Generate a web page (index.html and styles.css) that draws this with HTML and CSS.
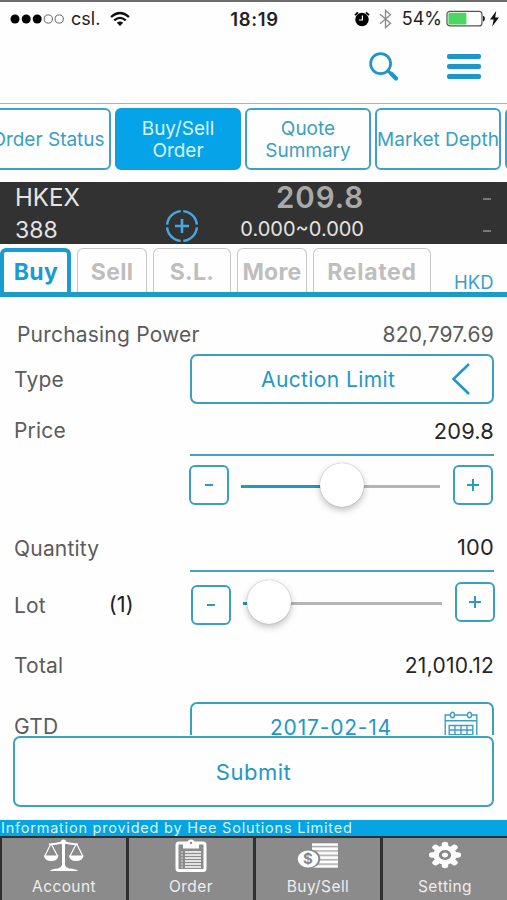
FILE: index.html
```html
<!DOCTYPE html>
<html lang="en">
   <head>
      <meta charset="utf-8" />
      <meta name="viewport" content="width=device-width" />
      <title>Buy/Sell Order</title>
      <link rel="stylesheet" href="styles.css">
   </head>

   <body>

      <div class="status">
         <div class="status-left">
            <svg class="signal" width="54" height="12" viewBox="0 0 54 12">
               <g fill="#000"><circle cx="5" cy="6" r="4.5"/><circle cx="16.2" cy="6" r="4.5"/><circle cx="27.2" cy="6" r="4.5"/></g>
               <g fill="none" stroke="#666" stroke-width="1"><circle cx="38.3" cy="6" r="4.1"/><circle cx="49.2" cy="6" r="4.1"/></g>
            </svg>
            <span class="carrier">csl.</span>
            <svg width="20" height="16" viewBox="0 0 20 16" fill="none" stroke="#111" stroke-width="2.3">
               <path d="M1 6 Q10 -2 19 6"/><path d="M4.3 9.4 Q10 4.3 15.7 9.4"/><path d="M10 15 L6.8 11.8 Q10 9.4 13.2 11.8 Z" fill="#111" stroke="none"/>
            </svg>
         </div>
         <span class="clock">18:19</span>
         <div class="status-right">
            <svg width="16" height="16" viewBox="0 0 16 16">
               <circle cx="8" cy="8.5" r="6.7" fill="#000"/>
               <path d="M1 4.2 L4 1.4 M15 4.2 L12 1.4" stroke="#000" stroke-width="1.8"/>
               <path d="M8.4 4.6 V9 H5" stroke="#fff" stroke-width="1.2" fill="none"/>
            </svg>
            <svg class="bluetooth" width="13" height="20" viewBox="0 0 13 20" fill="none" stroke="#888" stroke-width="1.3">
               <path d="M1 5.3 L11.5 14.2 L6.5 18.6 V1.4 L11.5 5.8 L1 14.7"/>
            </svg>
            <span class="percent">54%</span>
            <svg width="40" height="18" viewBox="0 0 40 18">
               <rect x="1" y="1.3" width="35" height="14.6" rx="3" fill="#fff" stroke="#555" stroke-width="1.2"/>
               <rect x="2.4" y="2.7" width="18" height="11.8" rx="1.3" fill="#4cd763"/>
               <path d="M37.5 6 Q39.6 8.6 37.5 11.2 Z" fill="#222" stroke="#222"/>
            </svg>
            <svg class="bolt" width="9" height="16" viewBox="0 0 9 16"><path d="M6.2 0 L0 8.4 H3.7 L2.2 15.5 L9 6.6 H5.2 Z" fill="#111"/></svg>
         </div>
      </div>

      <div class="header">
         <svg class="search" width="32" height="32" viewBox="0 0 32 32" fill="none" stroke="#1e95cb">
            <circle cx="12.6" cy="12.6" r="10" stroke-width="2.7"/>
            <path d="M20 20 L24 23.6" stroke-width="3"/>
            <path d="M23.3 22.8 L28 27.5" stroke-width="4.4" stroke-linecap="round"/>
         </svg>
         <div class="burger"><i></i><i></i><i></i></div>
      </div>

      <div class="pages">
         <div class="page">Order Status</div>
         <div class="page active">Buy/Sell<br>Order</div>
         <div class="page">Quote<br>Summary</div>
         <div class="page">Market Depth</div>
         <div class="page"></div>
      </div>

      <div class="quote">
         <div class="stock"><span class="stock-name">HKEX</span><span class="stock-code">388</span></div>
         <svg class="target" width="34" height="34" viewBox="0 0 34 34" fill="none" stroke="#46a9e4" stroke-width="2.4">
            <path d="M18.3 2.1 A15 15 0 0 1 31.9 15.7 M31.9 18.3 A15 15 0 0 1 18.3 31.9 M15.7 31.9 A15 15 0 0 1 2.1 18.3 M2.1 15.7 A15 15 0 0 1 15.7 2.1"/>
            <path d="M17 10 V24 M10 17 H24" stroke-width="2.6"/>
         </svg>
         <div class="last"><span class="last-price">209.8</span><span class="range">0.000~0.000</span></div>
         <div class="change"><i></i><i></i></div>
      </div>

      <div class="tabs">
         <div class="tab buy">Buy</div>
         <div class="tab sell">Sell</div>
         <div class="tab sl">S.L.</div>
         <div class="tab more">More</div>
         <div class="tab related">Related</div>
         <span class="currency">HKD</span>
      </div>

      <div class="form">
         <div class="row power">
            <span>Purchasing Power</span>
            <span class="value">820,797.69</span>
         </div>

         <div class="row type">
            <span class="label">Type</span>
            <div class="select">
               <span>Auction Limit</span>
               <svg width="20" height="34" viewBox="0 0 20 34" fill="none" stroke="#1e95cb" stroke-width="2.5"><path d="M18 2 L2.5 17 L18 32"/></svg>
            </div>
         </div>

         <div class="row price">
            <span class="label">Price</span>
            <div class="field"><span>209.8</span></div>
         </div>
         <div class="row step-price">
            <span class="label"></span>
            <div class="stepper">
               <button class="minus"></button>
               <div class="slider"><div class="fill"></div><div class="thumb"></div></div>
               <button class="plus"></button>
            </div>
         </div>

         <div class="row quantity">
            <span class="label">Quantity</span>
            <div class="field"><span>100</span></div>
         </div>
         <div class="row step-lot">
            <span class="label"><span>Lot</span><span class="lot-size">(1)</span></span>
            <div class="stepper">
               <button class="minus"></button>
               <div class="slider low"><div class="fill"></div><div class="thumb"></div></div>
               <button class="plus"></button>
            </div>
         </div>

         <div class="row total">
            <span class="label">Total</span>
            <span class="value">21,010.12</span>
         </div>

         <div class="row gtd">
            <span class="label">GTD</span>
            <div class="select date">
               <span>2017-02-14</span>
               <svg width="34" height="34" viewBox="0 0 34 34" fill="none" stroke="#3d9fc6" stroke-width="1.4">
                  <path d="M6.5 4 H1.2 V33 H32.8 V4 H27.5 M10.5 4 H23.5 M1 9.8 H33"/>
                  <ellipse cx="8.5" cy="4" rx="2" ry="2.8"/><ellipse cx="25.5" cy="4" rx="2" ry="2.8"/>
                  <path d="M5.2 14.5 H28.8 V29 H5.2 Z M5.2 19 H28.8 M5.2 23.8 H28.8 M11 14.5 V29 M17 14.5 V29 M23 14.5 V29"/>
               </svg>
            </div>
         </div>
      </div>

      <button class="submit"><span>Submit</span></button>

      <div class="provider"><span>Information provided by Hee Solutions Limited</span></div>

      <div class="nav">
         <div class="nav-item">
            <svg width="42" height="34" viewBox="0 0 42 34" fill="none" stroke="#fff">
               <path d="M20.5 2 V29" stroke-width="3"/><path d="M6 5.5 Q13 5 20.5 3.3 Q28 5 35 5.5" stroke-width="2.2"/>
               <circle cx="20.5" cy="3" r="2.6" fill="#fff" stroke="none"/>
               <path d="M7.5 5.5 L1.8 17 M8.5 5.5 L14.5 17 M33 5.5 L27 17 M34 5.5 L39.7 17" stroke-width="1.2"/>
               <path d="M0.8 16.5 H15.7 Q14.5 22 8.2 22 Q2 22 0.8 16.5 Z M25.8 16.5 H40.7 Q39.5 22 33 22 Q27 22 25.8 16.5 Z M7 32 Q8 30 15 29.5 Q18 29 19 26 H22 Q23 29 26 29.5 Q34 30 35 32 Z" fill="#fff" stroke="none"/>
            </svg>
            <span>Account</span>
         </div>
         <div class="nav-item">
            <svg width="32" height="34" viewBox="0 0 32 34" fill="none" stroke="#fff">
               <rect x="2" y="4" width="28" height="27.5" rx="2" stroke-width="3"/>
               <path d="M8 4 H12.4 Q12.8 .6 16 .6 Q19.2 .6 19.6 4 H24 V9.5 H8 Z" fill="#fff" stroke="none"/>
               <circle cx="16" cy="4" r="1.2" fill="#8b8b8b" stroke="none"/>
               <path d="M10 13 H26 M10 16 H26 M10 19 H26 M10 22 H26 M10 25 H26 M10 28 H26" stroke-width="1.3"/>
               <path d="M5.8 13 H8 M5.8 16 H8 M5.8 19 H8 M5.8 22 H8 M5.8 25 H8 M5.8 28 H8" stroke="#ddd" stroke-width="1"/>
            </svg>
            <span>Order</span>
         </div>
         <div class="nav-item">
            <svg width="42" height="34" viewBox="0 0 42 34">
               <rect x="15" y="4.5" width="26" height="24" fill="#ddd"/>
               <path d="M15 5.5 H41 M15 9.9 H41 M15 14.3 H41 M15 18.7 H41 M15 23.1 H41 M15 27.6 H41" stroke="#fff" stroke-width="2"/>
               <path d="M15 7.5 H41 M15 11.9 H41 M15 16.3 H41 M15 20.7 H41 M15 25.1 H41" stroke="#aaa" stroke-width="1"/>
               <ellipse cx="11.5" cy="19.8" rx="11.8" ry="9.8" fill="#8b8b8b"/>
               <ellipse cx="11" cy="20" rx="10.3" ry="8.6" fill="#fff"/>
               <text class="dollar" x="11" y="25.3" text-anchor="middle">$</text>
            </svg>
            <span>Buy/Sell</span>
         </div>
         <div class="nav-item">
            <svg width="36" height="34" viewBox="0 0 36 34">
               <g transform="translate(18 16) scale(1.22 1)">
                  <g stroke="#fff" stroke-width="5.4" stroke-linecap="round">
                     <path d="M0 -10.5 V10.5 M-10.5 0 H10.5 M-7.7 -7.7 L7.7 7.7 M-7.7 7.7 L7.7 -7.7"/>
                  </g>
                  <circle r="9.5" fill="#fff"/>
                  <circle r="3.8" fill="#fff" stroke="#888" stroke-width="2.6"/>
               </g>
            </svg>
            <span>Setting</span>
         </div>
      </div>
   </body>
</html>
```
FILE: styles.css
```css
* {
  box-sizing: border-box;
}

body {
  margin: 0;
  width: 507px;
  height: 900px;
  overflow: hidden;
  background-color: #fefefe;
  font-family: Inter, 'Liberation Sans', sans-serif;
  color: #5b5b5b;
  font-size: 21px;
  line-height: 1;
}

svg {
  display: block;
  flex: none;
}

span {
  white-space: nowrap;
}

button {
  padding: 0;
  font-family: inherit;
  background-color: #fefefe;
}

/* phone status bar */
.status {
  display: grid;
  grid-template-columns: 1fr auto 1fr;
  align-items: center;
  height: 36px;
  padding: 0 8px 0 10px;
  border-top: 2px solid #6d6d6d;
  color: #222;
  font-size: 18px;
}

.status-left, .status-right {
  display: flex;
  align-items: center;
}

.status-left {
  gap: 7px;
}

.carrier {
  width: 32px;
}

.clock {
  font-size: 18.5px;
  font-weight: 600;
  letter-spacing: .7px;
}

.status-right {
  justify-content: flex-end;
}

.bluetooth {
  margin: 0 10px 0 9px;
}

.percent {
  margin-right: 4px;
}

.bolt {
  margin-left: 4px;
}

.header {
  display: flex;
  justify-content: flex-end;
  align-items: flex-start;
  height: 68px;
  padding: 15px 26px 0 0;
  border-bottom: 1px solid #b3adb5;
}

.burger {
  display: flex;
  flex-direction: column;
  gap: 5px;
  width: 34px;
  margin: 3px 0 0 47px;
}

.burger i {
  height: 5px;
  border-radius: 2px;
  background-color: #1e95cb;
}

/* scrolling page buttons */
.pages {
  display: flex;
  gap: 4px;
  height: 78px;
  margin-left: -15px;
  padding-top: 4px;
  overflow: hidden;
}

.page {
  flex: none;
  display: flex;
  align-items: center;
  justify-content: center;
  width: 126px;
  height: 62px;
  padding-top: 2px;
  border: 2px solid #3da2c6;
  border-radius: 6px;
  color: #3a9fc3;
  font-size: 19px;
  line-height: 22px;
  text-align: center;
}

.page.active {
  border-color: #109fdd;
  background-color: #05a3e8;
  color: #d8f6ff;
}

/* stock bar */
.quote {
  display: flex;
  height: 62px;
  background-color: #323232;
  color: #e4e4e4;
}

.stock {
  display: flex;
  flex-direction: column;
  gap: 9px;
  width: 165px;
  padding: 4px 0 0 15px;
  font-size: 23px;
}

.stock-name {
  font-size: 24px;
}

.target {
  margin-top: 27px;
}

.last {
  display: flex;
  flex-direction: column;
  align-items: flex-end;
  width: 165px;
}

.last-price {
  height: 37px;
  color: #a9a9a9;
  font-size: 29.5px;
  font-weight: 600;
  line-height: 30px;
  letter-spacing: .9px;
}

.range {
  font-size: 20px;
}

.change {
  display: flex;
  flex-direction: column;
  gap: 30px;
  padding: 16px 0 0 119px;
}

.change i {
  width: 8px;
  height: 2px;
  background-color: #777;
}

/* order type tabs */
.tabs {
  display: flex;
  gap: 6px;
  height: 53px;
  padding-top: 4px;
  border-bottom: 5px solid #1a9bc9;
}

.tab {
  flex: none;
  height: 44px;
  border: 1.5px solid #c7c7c7;
  border-bottom: 0;
  border-radius: 6px 6px 0 0;
  color: #bebebe;
  font-size: 23px;
  font-weight: 700;
  line-height: 46px;
  letter-spacing: .3px;
  text-align: center;
}

.tab.buy {
  width: 71px;
  padding-left: 1px;
  border: 4px solid #1a9bd2;
  border-bottom: 0;
  color: #1a9bd2;
  line-height: 41px;
}

.tab.sell { width: 70px; }
.tab.sl { width: 78px; }
.tab.more { width: 70px; }
.tab.related {
  width: 118px;
  letter-spacing: .7px;
}

.currency {
  margin: 25px 0 0 17px;
  color: #3a9fc8;
  font-size: 18.5px;
}

/* order form */
.form {
  height: 438px;
  padding: 20px 13px 0 14px;
  overflow: hidden;
  letter-spacing: .2px;
}

.row {
  display: flex;
}

.label {
  display: flex;
  flex: none;
  align-items: center;
  width: 176px;
}

.value {
  margin-left: auto;
}

.power {
  align-items: center;
  height: 34px;
  padding-left: 3px;
}

.select {
  display: flex;
  flex: 1;
  align-items: center;
  height: 50px;
  padding: 0 21px 0 69px;
  border: 2px solid #3d9fc0;
  border-radius: 7px;
  color: #2298c8;
  letter-spacing: .4px;
}

.select svg {
  margin-left: auto;
}

.type {
  height: 51px;
  margin-top: 3px;
}

.price {
  height: 51px;
}

.field {
  display: flex;
  flex: 1;
  align-items: center;
  justify-content: flex-end;
  padding-top: 4px;
  border-bottom: 2px solid #46a1c0;
  color: #262626;
  font-size: 21.8px;
}

.stepper {
  display: flex;
  flex: 1;
}

.step-price {
  height: 49px;
  padding-top: 9px;
}

.step-price .stepper {
  margin: 0 1px 0 -1px;
}

.stepper button {
  flex: none;
  display: grid;
  place-items: center;
  width: 40px;
  height: 40px;
  border: 2px solid #3a9fc4;
  border-radius: 6px;
}

.minus::before,
.plus::before,
.plus::after {
  content: "";
  grid-area: 1 / 1;
  width: 12px;
  height: 2px;
  background-color: #2b9ac5;
}

.minus::before {
  width: 8px;
}

.plus::after {
  width: 2px;
  height: 12px;
}

.slider {
  display: flex;
  flex: 1;
  align-items: center;
  height: 3px;
  margin: 20px 13px 0 12px;
  background-color: #b5b5b5;
}

.fill {
  width: 79px;
  height: 3px;
  background-color: #2496c0;
}

.thumb {
  flex: none;
  width: 44px;
  height: 44px;
  margin-top: -3px;
  border-radius: 50%;
  background-color: #fff;
  box-shadow: 0 3px 7px rgba(0, 0, 0, .25), 0 0 1px rgba(0, 0, 0, .4);
}

.low .fill {
  width: 4px;
}

.quantity {
  height: 47px;
  margin-top: 20px;
}

.quantity .field {
  padding-top: 1px;
}

.step-lot {
  height: 66px;
}

.step-lot .label {
  height: 66px;
}

.lot-size {
  margin-left: auto;
  margin-right: 56px;
  color: #222;
  font-size: 21.8px;
}

.step-lot .stepper {
  margin: 10px -1px 0 1px;
}

.step-lot .minus {
  margin-top: 3px;
}

.total {
  height: 64px;
  align-items: center;
  padding-bottom: 10px;
}

.total .value {
  color: #262626;
  letter-spacing: .25px;
}

.gtd .label {
  height: 48px;
}

.date {
  padding: 0 14px 0 78px;
  letter-spacing: .8px;
}

.date svg {
  align-self: flex-start;
  margin-top: 7px;
}

.submit {
  display: block;
  width: 481px;
  height: 71px;
  margin: 1px 0 0 13px;
  border: 2px solid #3da2c2;
  border-radius: 7px;
  color: #1f98c9;
  font-size: 22px;
  letter-spacing: .5px;
}

/* bottom bars */
.provider {
  height: 16px;
  margin-top: 13px;
  padding-left: 1px;
  background-color: #07a4e3;
  color: #d4f5ff;
  font-size: 14.5px;
  line-height: 16px;
  letter-spacing: .78px;
}

.nav {
  display: grid;
  grid-template-columns: 124px 124px 124px 124px;
  gap: 3px;
  height: 64px;
  padding: 2px;
  background-color: #303030;
}

.nav-item {
  display: flex;
  flex-direction: column;
  align-items: center;
  padding-top: 1px;
  background-color: #8b8b8b;
  color: #eee;
  font-size: 15.5px;
  line-height: 28px;
  letter-spacing: .4px;
}

.dollar {
  fill: #888;
  font-size: 15px;
  font-weight: 700;
}
```
